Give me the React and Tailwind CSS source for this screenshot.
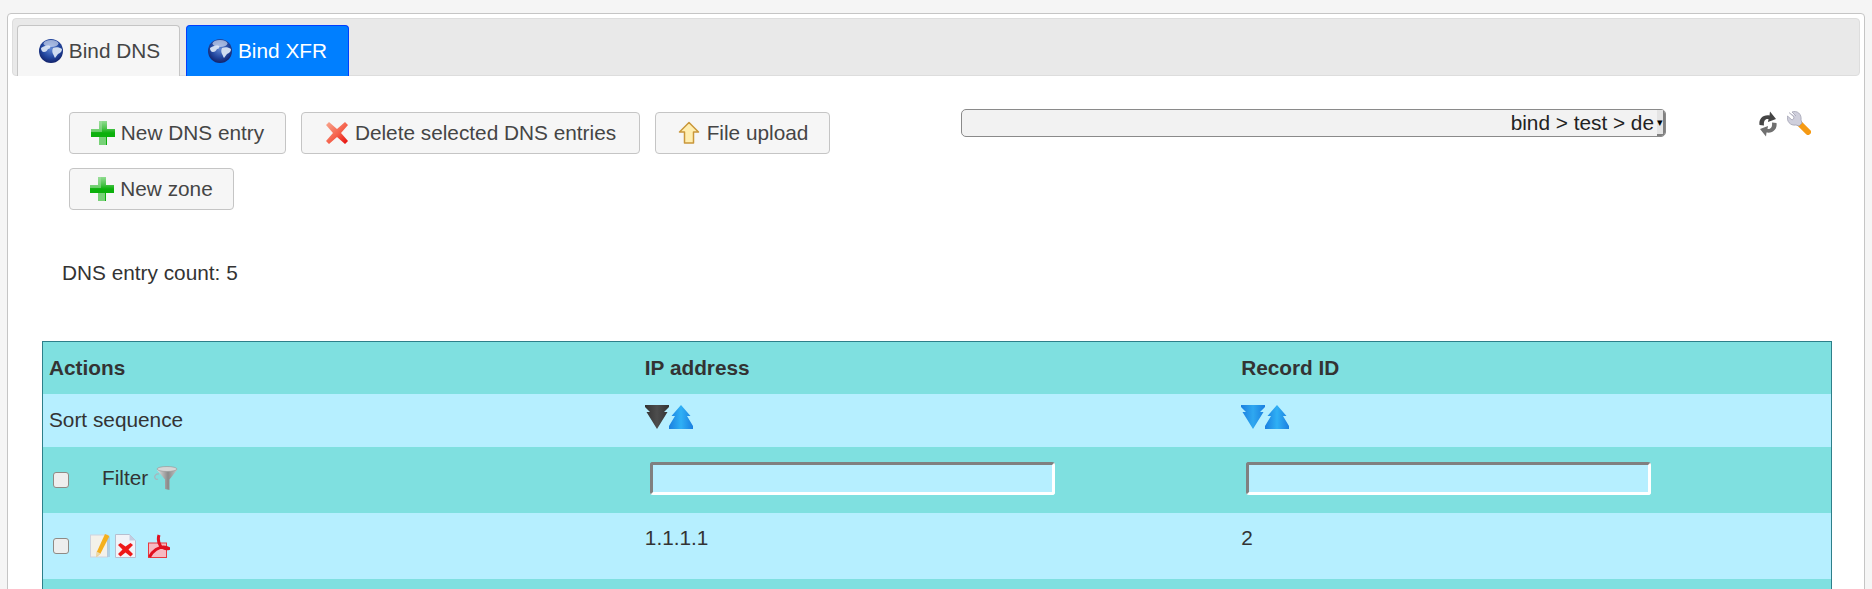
const font = { fontFamily: '"Liberation Sans", Arial, sans-serif' };

function Globe({ id }) {
  return (
    <svg width="24" height="24" viewBox="0 0 24 24" className="shrink-0">
      <defs>
        <radialGradient id={id} cx="50%" cy="40%" r="62%">
          <stop offset="0%" stopColor="#5f86d4" />
          <stop offset="60%" stopColor="#23479f" />
          <stop offset="100%" stopColor="#101f66" />
        </radialGradient>
      </defs>
      <circle cx="12" cy="12" r="12" fill={`url(#${id})`} />
      <path d="M2 9c3-2 6-3 9-2 1 1 0 3-2 3-1 2-2 3-4 3-2 0-3-2-3-4zM14 9c3-1 6-1 9 1 0 3-2 4-4 5-1 1-2 3-3 4-1-1-1-3-2-4-1-2-1-4 0-6z" fill="#cfdcf0" />
      <ellipse cx="12" cy="4.500" rx="7.500" ry="3.500" fill="#e8eefa" opacity="0.6" />
    </svg>
  );
}

function Plus({ id }) {
  return (
    <svg width="24" height="24" viewBox="0 0 24 24" className="shrink-0">
      <defs>
        <linearGradient id={id} x1="0" y1="0" x2="0" y2="1">
          <stop offset="0%" stopColor="#8fdc8f" />
          <stop offset="30%" stopColor="#4fc44f" />
          <stop offset="50%" stopColor="#0cb00c" />
          <stop offset="100%" stopColor="#0cb00c" />
        </linearGradient>
      </defs>
      <path d="M8 0h8v8h8v8h-8v8H8v-8H0V8h8z" fill={`url(#${id})`} />
      <path d="M0 8h8V0h3v11H0z" fill="#a6e0a6" opacity="0.55" />
      <path d="M15 16v8H8v-8z" fill="#a6e0a6" opacity="0.7" />
    </svg>
  );
}

function RedCross() {
  return (
    <svg width="24" height="24" viewBox="0 0 24 24" className="shrink-0">
      <defs>
        <linearGradient id="crossRed" x1="0" y1="0" x2="1" y2="1">
          <stop offset="0%" stopColor="#f8a890" />
          <stop offset="55%" stopColor="#f5604a" />
          <stop offset="100%" stopColor="#e60808" />
        </linearGradient>
      </defs>
      <path d="M4 1l8 7 8-7 3 3-7 8 7 8-3 3-8-7-8 7-3-3 7-8-7-8z" fill="url(#crossRed)" />
    </svg>
  );
}

function UpArrow() {
  return (
    <svg width="24" height="24" viewBox="0 0 24 24" className="shrink-0">
      <path d="M12 1.500L21.500 11h-5v11h-9V11h-5z" fill="#ffeeb0" stroke="#c9973a" strokeWidth="1.500" strokeLinejoin="round" />
    </svg>
  );
}

function Refresh() {
  return (
    <svg width="24" height="26" viewBox="0 0 24 26" className="shrink-0">
      <path d="M3.500 14C2.500 8 7 3.500 13.500 4.500L14 .5l6 7.500-8 3 .5-3C9 7.500 7.500 10 8 14.500z" fill="#454545" />
      <path d="M20.500 12c1 6-3.500 10.500-10 9.500l-.5 4-6-7.500 8-3-.5 3c3.500.5 5-2 4.500-6.500z" fill="#707070" />
    </svg>
  );
}

function Wrench() {
  return (
    <svg width="24" height="24" viewBox="0 0 24 24" className="shrink-0">
      <path d="M10 10l11 11" stroke="#f59a14" strokeWidth="6" strokeLinecap="round" />
      <path d="M2 1.500L7 6l-.5 2L5 9 .5 5C-.5 10 3 15 9 14l3 1 3-3-1-3c1-6-4-10-9-8l4 4" fill="#cfcfdc" stroke="#a2a2b2" strokeWidth="0.800" />
    </svg>
  );
}

function Funnel() {
  return (
    <svg width="24" height="24" viewBox="0 0 24 24" className="shrink-0">
      <defs>
        <linearGradient id="funnelGrey" x1="0" y1="0" x2="1" y2="0">
          <stop offset="0%" stopColor="#e2e2e2" />
          <stop offset="55%" stopColor="#8a8a8a" />
          <stop offset="100%" stopColor="#c4c4c4" />
        </linearGradient>
      </defs>
      <path d="M3 4h20l-7.500 9.500V24L11 23v-9.500z" fill="url(#funnelGrey)" />
      <ellipse cx="13" cy="3" rx="10" ry="2.500" fill="#d6d6d6" stroke="#9b9b9b" strokeWidth="0.700" />
      <path d="M5 8c-3-.5-5 2-4 4 .5 1.500 2 1.500 3 1" fill="none" stroke="#a8b4bb" strokeWidth="1.200" />
    </svg>
  );
}

function EditIcon() {
  return (
    <svg width="20" height="24" viewBox="0 0 20 24" className="shrink-0">
      <rect x="0.500" y="1" width="17" height="22" fill="#f3f1ea" stroke="#cdd3df" />
      <rect x="17" y="3" width="3" height="20" fill="#a9c4da" opacity="0.7" />
      <path d="M15 0l4.500 2-9 17.500-4 3.500.5-5.500z" fill="#f4b01e" />
      <path d="M6 23l.5-5.500L10.500 19.500z" fill="#ead8b0" />
    </svg>
  );
}

function DeleteDoc() {
  return (
    <svg width="21" height="24" viewBox="0 0 21 24" className="shrink-0">
      <path d="M.5.500h14l6 6v17H.5z" fill="#f2f3f8" stroke="#b7bfd0" />
      <path d="M14.500.500v6h6z" fill="#c3cde0" />
      <path d="M3 11l2.500-2 5 3.500 5-3.500 2.500 2-4.500 4.500L18 20l-2.500 2.500-5-4-5 4L3 20l4.500-4.500z" fill="#ee1818" />
    </svg>
  );
}

function PdfIcon() {
  return (
    <svg width="22" height="24" viewBox="0 0 22 24" className="shrink-0">
      <rect x="0.500" y="9" width="18" height="14.500" fill="#f7b9c2" stroke="#e8393f" />
      <path d="M11 1c-1.500 5-.5 8 1.500 11 2 2 5.500 3 8.500 2.500-4-2.500-9-1.500-13 1-3 2-5 4.500-6.500 7.500" fill="none" stroke="#e01020" strokeWidth="3" />
    </svg>
  );
}

function SortDown({ dark, id }) {
  const from = dark ? '#333333' : '#1a7fe0';
  const to = dark ? '#4d4d4d' : '#2fa8f0';
  return (
    <svg width="24" height="24" viewBox="0 0 24 24" className="shrink-0">
      <defs>
        <linearGradient id={id} x1="0" y1="0" x2="1" y2="0">
          <stop offset="0%" stopColor={from} />
          <stop offset="50%" stopColor={to} />
          <stop offset="100%" stopColor={from} />
        </linearGradient>
      </defs>
      <path d="M0 0h24v2l-5 5h3.500L12 24 1.500 7H5L0 2z" fill={`url(#${id})`} />
    </svg>
  );
}

function SortUp({ id }) {
  return (
    <svg width="24" height="24" viewBox="0 0 24 24" className="shrink-0">
      <defs>
        <linearGradient id={id} x1="0" y1="0" x2="1" y2="0">
          <stop offset="0%" stopColor="#1a7fe0" />
          <stop offset="50%" stopColor="#2fb0f5" />
          <stop offset="100%" stopColor="#1a7fe0" />
        </linearGradient>
      </defs>
      <path d="M12 0l9.500 11H18l6 10v3H0v-3l6-10H2.500z" fill={`url(#${id})`} />
    </svg>
  );
}

function Button({ icon, width, children }) {
  return (
    <button className={`flex h-[42px] items-center justify-center gap-[6px] rounded-[4px] border border-[#c5c5c5] bg-[#f6f6f6] text-[20.8px] text-[#454545] ${width}`}>
      {icon}
      {children}
    </button>
  );
}

function Checkbox() {
  return <input type="checkbox" className="h-[16px] w-[16px] appearance-none rounded-[3px] border border-[#8f8a85] bg-[#eeeeee]" />;
}

function FilterInput() {
  return (
    <input
      type="text"
      className="h-[33px] w-[405px] rounded-[3px] border-[3px] border-t-[#808080] border-l-[#808080] border-r-white border-b-white bg-[#b6efff]"
    />
  );
}

export default function App() {
  return (
    <div style={font} className="h-[589px] overflow-hidden bg-[#f5f5f5] px-[7px] pt-[13px] text-[20.8px] text-[#333333]">
      <div className="h-[620px] rounded-[4px] border border-[#c5c5c5] bg-white p-[4px]">
        <div className="flex h-[58px] items-end gap-[6px] rounded-[4px] border border-[#dddddd] bg-[#e9e9e9] pl-[4px]">
          <div className="-mb-px flex h-[51px] w-[163px] items-center justify-center gap-[6px] rounded-t-[4px] border border-b-0 border-[#c5c5c5] bg-[#f6f6f6] pl-[2px] text-[#454545]">
            <Globe id="globeA" />
            Bind DNS
          </div>
          <div className="-mb-px flex h-[51px] w-[163px] items-center justify-center gap-[6px] rounded-t-[4px] border border-b-0 border-[#003eff] bg-[#007fff] text-white">
            <Globe id="globeB" />
            Bind XFR
          </div>
        </div>

        <div className="flex items-start pl-[57px] pt-[36px]">
          <div className="flex w-[892px] flex-wrap gap-x-[15px] gap-y-[14px]">
            <Button width="w-[217px]" icon={<Plus id="plusA" />}>New DNS entry</Button>
            <Button width="w-[339px]" icon={<RedCross />}>Delete selected DNS entries</Button>
            <Button width="w-[175px]" icon={<UpArrow />}>File upload</Button>
            <Button width="w-[165px]" icon={<Plus id="plusB" />}>New zone</Button>
          </div>
          <div className="-mt-[3px] flex h-[28px] w-[705px] items-center justify-end overflow-hidden rounded-[5px] border border-[#8a8a8a] bg-[#f2f2f2] text-[#222222]">
            <span className="whitespace-nowrap">bind &gt; test &gt; de</span>
            <span className="ml-[3px] flex h-full w-[8px] shrink-0 items-center justify-center border-r-2 border-b-2 border-[#808080] bg-[#e4e4e4] text-[11px] leading-none text-black">▾</span>
          </div>
          <div className="-mt-[1px] ml-[90px] flex items-start gap-[7px]">
            <Refresh />
            <Wrench />
          </div>
        </div>

        <div className="mt-[51px] pl-[50px] leading-[23px]">DNS entry count: 5</div>

        <table className="mt-[57px] ml-[30px] w-[1790px] table-fixed border-collapse border border-[#2d7f8a]">
          <tbody>
            <tr className="h-[52px] bg-[#7fe0e0] font-bold">
              <td className="px-[6px]">Actions</td>
              <td className="px-[6px]">IP address</td>
              <td className="px-[6px]">Record ID</td>
            </tr>
            <tr className="h-[53px] bg-[#b6efff]">
              <td className="px-[6px]">Sort sequence</td>
              <td className="px-[6px] pb-[7px]">
                <div className="flex">
                  <SortDown dark id="downA" />
                  <SortUp id="upA" />
                </div>
              </td>
              <td className="px-[6px] pb-[7px]">
                <div className="flex">
                  <SortDown id="downB" />
                  <SortUp id="upB" />
                </div>
              </td>
            </tr>
            <tr className="h-[66px] bg-[#7fe0e0]">
              <td className="px-[10px]">
                <div className="flex items-center">
                  <Checkbox />
                  <span className="mb-[3px] ml-[33px]">Filter</span>
                  <span className="mb-[3px] ml-[6px]"><Funnel /></span>
                </div>
              </td>
              <td className="pb-[2px] pl-[11px]"><FilterInput /></td>
              <td className="pb-[2px] pl-[11px]"><FilterInput /></td>
            </tr>
            <tr className="h-[66px] bg-[#b6efff]">
              <td className="px-[10px]">
                <div className="flex items-center">
                  <Checkbox />
                  <span className="ml-[21px]"><EditIcon /></span>
                  <span className="ml-[5px]"><DeleteDoc /></span>
                  <span className="ml-[12px]"><PdfIcon /></span>
                </div>
              </td>
              <td className="px-[6px] pb-[16px]">1.1.1.1</td>
              <td className="px-[6px] pb-[16px]">2</td>
            </tr>
            <tr className="h-[66px] bg-[#7fe0e0]">
              <td colSpan="3"></td>
            </tr>
          </tbody>
        </table>
      </div>
    </div>
  );
}
